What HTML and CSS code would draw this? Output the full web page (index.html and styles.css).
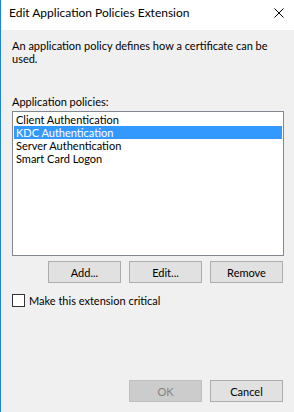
FILE: index.html
```html
<!DOCTYPE html>
<html lang="en">
<head>
  <meta charset="UTF-8">
  <title>Edit Application Policies Extension</title>
  <link rel="stylesheet" href="styles.css">
</head>
<body>
  <div class="window">
    <div class="titlebar">
      <span class="title">Edit Application Policies Extension</span>
      <svg class="close" width="10" height="10" viewBox="0 0 10 10">
        <path d="M0.5 0.5 L9.5 9.5 M9.5 0.5 L0.5 9.5" stroke="#000" stroke-width="1" fill="none"/>
      </svg>
    </div>

    <div class="content">
      <p class="desc">An application policy defines how a certificate can be used.</p>

      <div class="label">Application policies:</div>
      <ul class="listbox">
        <li>Client Authentication</li>
        <li class="selected">KDC Authentication</li>
        <li>Server Authentication</li>
        <li>Smart Card Logon</li>
      </ul>

      <div class="btn-row">
        <button class="btn">Add...</button>
        <button class="btn">Edit...</button>
        <button class="btn">Remove</button>
      </div>

      <label class="check"><span class="box"></span>Make this extension critical</label>

      <div class="footer">
        <button class="btn" disabled>OK</button>
        <button class="btn">Cancel</button>
      </div>
    </div>
  </div>
</body>
</html>
```

FILE: styles.css
```css
html, body { margin: 0; padding: 0; }
body { font-family: Lato, "Liberation Sans", sans-serif; font-size: 11px; color: #000; background: #f0f0f0; }
.window { width: 293px; height: 412px; border-left: 1px solid #1883d7; background: #f0f0f0; display: flex; flex-direction: column; }

.titlebar { height: 30px; background: #fff; display: flex; align-items: flex-start; justify-content: space-between; }
.title { margin: 5px 0 0 8px; line-height: 16px; font-size: 12px; }
.close { margin: 8px 10px 0 0; }

.content { padding: 9px 10px 0 11px; display: flex; flex-direction: column; flex: 1; }
.desc { margin: 0; line-height: 13px; width: 268px; }
.label { margin-top: 30px; line-height: 13px; }

.listbox { list-style: none; margin: 3px 0 0 0; padding: 1px; width: 268px; height: 141px; background: #fff; border: 1px solid #828790; }
.listbox li { line-height: 13px; padding-left: 2px; }
.listbox .selected { background: #3399ff; color: #fff; }

.btn-row { display: flex; justify-content: flex-end; gap: 8px; margin-top: 5px; padding-right: 1px; }
.btn { width: 73px; height: 22px; padding: 0; background: #e1e1e1; border: 1px solid #adadad; font-family: inherit; font-size: 11px; color: #000; }
.btn:disabled { background: #cccccc; border-color: #bfbfbf; color: #838383; }

.check { display: flex; align-items: center; margin-top: 11px; line-height: 13px; }
.box { width: 11px; height: 11px; border: 1px solid #333; background: #fff; margin-right: 4px; }

.footer { margin-top: auto; margin-bottom: 10px; display: flex; justify-content: flex-end; gap: 8px; padding-right: 1px; }
```
